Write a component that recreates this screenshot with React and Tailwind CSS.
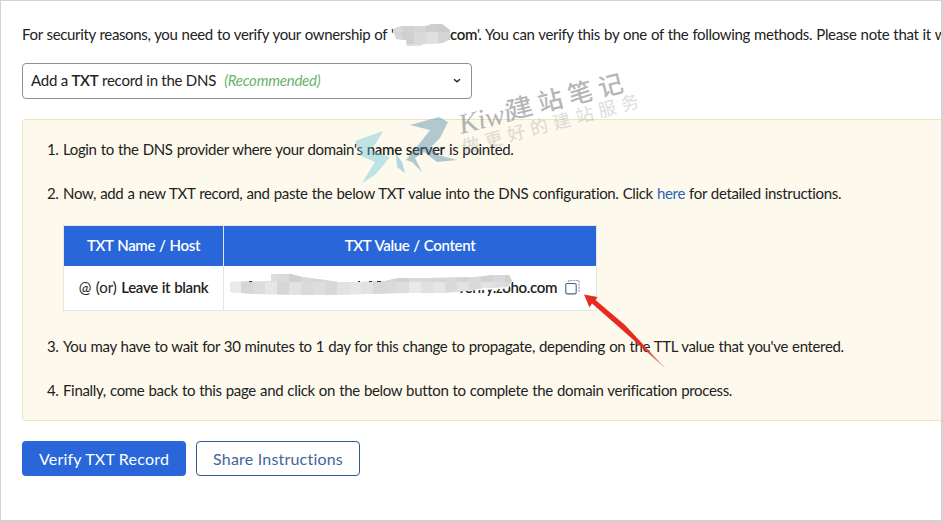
function Mosaic({ id, outline, tiles, tile, box }) {
  const [x0, y0, w, h] = box;
  const cols = Math.ceil(w / tile);
  const cells = [];
  tiles.forEach((row, r) =>
    row.slice(0, cols).forEach((fill, c) => cells.push([x0 + c * tile, y0 + r * tile, fill]))
  );
  return (
    <g>
      <clipPath id={id}>
        <path d={outline} />
      </clipPath>
      <g clipPath={`url(#${id})`} shapeRendering="crispEdges">
        <rect x={x0} y={y0} width={w} height={h} fill="#d8d8d8" />
        {cells.map(([x, y, v], i) => (
          <rect key={i} x={x} y={y} width={tile} height={tile} fill={`rgb(${v},${v},${v})`} />
        ))}
      </g>
    </g>
  );
}

function Overlay() {
  return (
    <svg className="pointer-events-none absolute -left-px -top-px" width="943" height="522" viewBox="0 0 943 522">
      <Mosaic
        id="domain"
        box={[390, 20, 64, 30]}
        tile={12}
        outline="M393 29 L401 26 L426 26 L432 24 L442 24 L450 30 L450 39 L443 43 L424 44 L420 46 L407 46 L406 40 L396 39 Z"
        tiles={[
          [218, 210, 214, 206, 204, 214],
          [214, 208, 218, 224, 212, 220],
          [222, 222, 224, 214, 216, 224],
        ]}
      />
      <path d="M450 276 L514 275 L512 282 L508 288.5 L484 290 L450 291 Z" fill="#fff" />
      <Mosaic
        id="value"
        box={[229, 270, 288, 28]}
        tile={12}
        outline="M230 282 L271 281 L271 274 L291 274 L302 277 L325 280 L338 282 L360 282 L385 281 L398 278 L430 278 L475 277 L494 275 L509 275 L512 281 L508 287 L484 288 L466 291 L440 293 L402 293 L368 294 L315 295 L255 294 L230 292 Z"
        tiles={[
          [228, 216, 226, 222, 218, 208, 216, 214, 216, 218, 226, 218, 212, 214, 210, 218, 216, 214, 218, 212, 218, 210, 216, 208],
          [234, 214, 220, 230, 214, 226, 218, 222, 216, 226, 230, 226, 216, 218, 222, 234, 224, 230, 218, 226, 218, 226, 222, 218],
          [234, 214, 220, 230, 214, 226, 218, 222, 216, 226, 230, 226, 216, 218, 222, 234, 224, 230, 218, 226, 218, 226, 222, 218],
        ]}
      />
      <g fill="#333">
        <rect x="249" y="281" width="3" height="1" />
        <rect x="358" y="281" width="2" height="1" />
        <rect x="369" y="281" width="3" height="1" />
        <rect x="377" y="281" width="4" height="1" />
      </g>
      <g opacity="0.42">
        <path d="M355 141 L383 131 L376 143 L370 150 L390 157 L375 175 L362 183 L375 162 L361 156 Z" fill="#67c6dc" />
        <path d="M396 154 L402 162 L405 173 L397 167 Z" fill="#4da9c8" />
        <path d="M410 125 L439 117 L448 122 L440 138 L431 147 L438 155 L457 160 L437 162 L424 152 L415 158 L422 172 L412 162 L406 160 L416 148 L430 130 Z" fill="#4d87a8" />
      </g>
      <g transform="translate(461 134) rotate(-14)" fill="#77777a" fillOpacity="0.55">
        <text x="0" y="0" fontSize="28" fontStyle="italic" fontFamily="'Liberation Serif', serif" textLength="54" lengthAdjust="spacingAndGlyphs">Kiwi</text>
        <text x="51" y="-2" fontSize="25" fontWeight="500" fontFamily="'Noto Sans CJK SC', sans-serif" textLength="118">建站笔记</text>
      </g>
      <g transform="translate(464 154) rotate(-15)" fill="#858585" fillOpacity="0.25">
        <text x="0" y="0" fontSize="18" fontWeight="500" fontFamily="'Noto Sans CJK SC', sans-serif" textLength="182">做更好的建站服务</text>
      </g>
      <defs>
        <linearGradient id="tail" gradientUnits="userSpaceOnUse" x1="640" y1="345" x2="666" y2="369">
          <stop offset="0" stopColor="#e82b20" />
          <stop offset="1" stopColor="#b84038" stopOpacity="0.45" />
        </linearGradient>
      </defs>
      <path d="M584 294.5 L597.5 297 L595.5 300 L625 325 L666 369 L620 328 L592 303.5 L589.5 307.5 Z" fill="url(#tail)" />
    </svg>
  );
}

function CopyIcon() {
  return (
    <svg width="16" height="16" viewBox="0 0 16 16" fill="none" stroke="#41618f" strokeWidth="1.1">
      <rect x="0.8" y="4.5" width="10.4" height="10.4" rx="1.5" />
      <path d="M3.8 3V1.5H14V12H12.5" stroke="#8297b5" strokeDasharray="2 1" />
    </svg>
  );
}

export default function App() {
  return (
    <div className="relative h-[522px] w-[943px] overflow-hidden border-t border-r-2 border-b-2 border-l border-[#d2d2d2] bg-white font-['Lato',sans-serif] text-[15px] leading-5 tracking-[-0.353px] [word-spacing:0.6px] text-[#222]">
      <main className="flex flex-col items-start pl-[21px] pt-[23px]">
        <p className="flex whitespace-nowrap">
          <span className="w-[372px] shrink-0">For security reasons, you need to verify your ownership of '</span>
          <span className="w-[83px] shrink-0 text-right font-semibold">.com</span>
          <span className="whitespace-pre tracking-[-0.34px]">'. You can verify this by one of the following methods. Please note that it w</span>
        </p>
        <button className="mt-[19px] flex h-9 w-[450px] items-center rounded-[4px] border border-[#8e8e95] bg-white px-2 pb-0.5 text-left tracking-[-0.25px]">
          <span className="whitespace-pre">Add a <b className="font-semibold">TXT</b> record in the DNS</span>
          <span className="ml-2 italic text-[#68b46c]">(Recommended)</span>
          <svg className="ml-auto" width="12" height="8" viewBox="0 0 12 8" fill="none" stroke="#222" strokeWidth="1.4">
            <path d="M3 3.2L6 5.8L9 3.2" />
          </svg>
        </button>
        <section className="mt-5 h-[302px] w-[940px] rounded-l-[3px] border border-[#ece5c0] bg-[#fdf9ec] pl-6 pt-[19px]">
          <p className="flex whitespace-nowrap">
            <span className="w-4">1.</span>
            <span>Login to the DNS provider where your domain's <b className="font-semibold">name server</b> is pointed.</span>
          </p>
          <p className="mt-6 flex whitespace-nowrap">
            <span className="w-4">2.</span>
            <span className="tracking-[-0.34px]">Now, add a new TXT record, and paste the below TXT value into the DNS configuration. Click <a className="text-[#2864b8]">here</a> for detailed instructions.</span>
          </p>
          <div className="ml-4 mt-[22px] grid h-[86px] w-[534px] grid-cols-[160px_372px] grid-rows-[40px_44px] border border-[#e4e6e4] bg-white font-semibold">
            <div className="flex items-center justify-center border-r border-[#dce6f8] bg-[#2866da] pb-0.5 text-white">TXT Name / Host</div>
            <div className="flex items-center justify-center bg-[#2866da] pb-0.5 text-white">TXT Value / Content</div>
            <div className="flex items-center justify-center border-r border-[#e4e6e4] whitespace-pre pb-0.5"><span className="font-normal tracking-normal">@ (or) </span>Leave it blank</div>
            <div className="flex items-center justify-end pr-[15px] pb-0.5">
              <span className="mr-2 pb-px">verify.zoho.com</span>
              <CopyIcon />
            </div>
          </div>
          <p className="mt-[25px] flex whitespace-nowrap">
            <span className="w-4">3.</span>
            <span>You may have to wait for 30 minutes to 1 day for this change to propagate, depending on the TTL value that you've entered.</span>
          </p>
          <p className="mt-6 flex whitespace-nowrap">
            <span className="w-4">4.</span>
            <span className="tracking-[-0.335px]">Finally, come back to this page and click on the below button to complete the domain verification process.</span>
          </p>
        </section>
        <div className="mt-5 flex gap-[10px] text-base tracking-[0.2px] [word-spacing:0px]">
          <button className="h-[35px] w-[164px] rounded-[4px] bg-[#2866da] text-white">Verify TXT Record</button>
          <button className="h-[35px] w-[164px] rounded-[4px] border border-[#315a91] bg-white text-[#44639a]">Share Instructions</button>
        </div>
      </main>
      <Overlay />
    </div>
  );
}
